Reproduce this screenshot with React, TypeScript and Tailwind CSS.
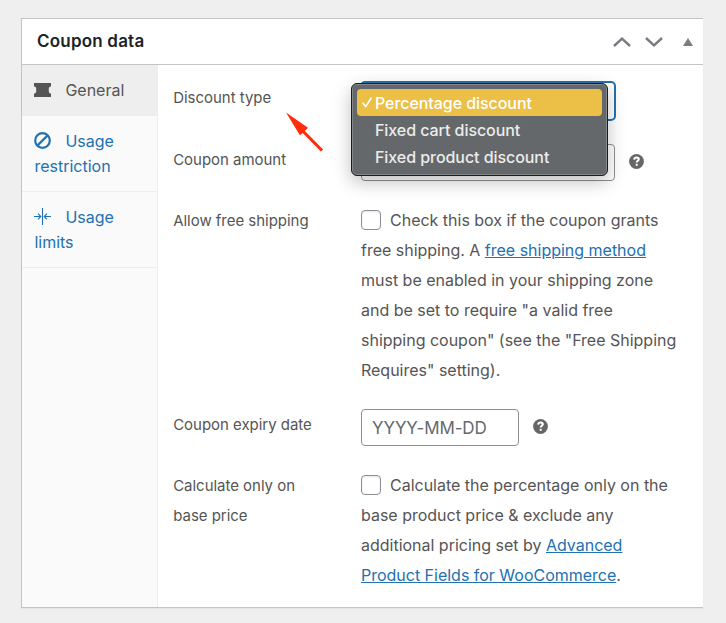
import type { ReactNode } from "react";

const discountTypes = ["Percentage discount", "Fixed cart discount", "Fixed product discount"];

function TicketIcon() {
  return (
    <svg className="relative -top-px" width="17" height="14" viewBox="0 0 17 14" fill="#555555">
      <path d="M0 0h17v3.6h-.6a2 2 0 0 0-1.6 2v2.8a2 2 0 0 0 1.6 2h.6V14H0v-3.6h.6a2 2 0 0 0 1.6-2V5.6a2 2 0 0 0-1.6-2H0Z" />
    </svg>
  );
}

function BanIcon() {
  return (
    <svg width="17" height="17" viewBox="0 0 17 17" fill="none" stroke="currentColor" strokeWidth="2.2">
      <circle cx="8.5" cy="8.5" r="7.3" />
      <path d="m3.6 13.4 9.8-9.8" />
    </svg>
  );
}

function LimitsIcon() {
  return (
    <svg width="17" height="17" viewBox="0 0 17 17" fill="none" stroke="currentColor" strokeWidth="1.1">
      <path d="M8.5 0v17" />
      <path d="M0 8.5h6.5M4 5.7l2.8 2.8L4 11.3M17 8.500h-6.500M13 5.700l-2.800 2.800 2.800 2.800" />
    </svg>
  );
}

function HelpTip() {
  return (
    <svg className="shrink-0" width="15" height="15" viewBox="0 0 15 15">
      <circle cx="7.5" cy="7.5" r="7.4" fill="#666666" />
      <path d="M5.2 5.6c.1-1.4 1-2.1 2.3-2.1s2.3.7 2.3 1.8c0 1.500-2.100 1.600-2.100 3.300" fill="none" stroke="#fff" strokeWidth="2" />
      <rect x="6.7" y="9.8" width="2" height="2" fill="#fff" />
    </svg>
  );
}

function Tab({ icon, active, children }: { icon: ReactNode; active?: boolean; children: ReactNode }) {
  return (
    <li
      className={
        active
          ? "border-b border-[#eeeeee] bg-[#eeeeee] pt-[13px] pr-3 pb-3 pl-[12.4px] text-[#555555]"
          : "border-b border-[#eeeeee] pt-[13px] pr-3 pb-3 pl-[12.4px] text-[#2271b1]"
      }
    >
      <span className="mr-[14.5px] -ml-[0.5px] inline-flex h-[17px] w-[17px] items-center align-[-1.5px]">{icon}</span>
      {children}
    </li>
  );
}

function Field({ label, className, children }: { label: ReactNode; className: string; children: ReactNode }) {
  return (
    <div className={`flex ${className}`}>
      <label className="w-[188px] shrink-0 pl-[0.2px] text-[15px] leading-[30px] tracking-[-0.03px]">{label}</label>
      {children}
    </div>
  );
}

function Checkbox() {
  return (
    <span className="mr-[9px] inline-block h-5 w-5 rounded-[4px] border border-[#8c8f94] bg-white align-[-4px] shadow-[inset_0_1px_2px_rgba(0,0,0,0.1)]" />
  );
}

export default function App() {
  return (
    <div className="h-[623px] w-[726px] overflow-hidden bg-[#efefef] pt-[18px] pl-[21px] font-['Inter','Liberation_Sans',sans-serif] text-base">
      <div className="flex h-[590px] w-[682px] flex-col border-y border-l border-[#c3c4c7] bg-white shadow-[0_1px_1px_rgba(0,0,0,0.04)]">
        <header className="flex h-[46px] shrink-0 items-center justify-between border-b border-[#c3c4c7] pr-[10.5px] pl-[15px]">
          <h2 className="text-[17px] font-semibold tracking-[0.2px] text-[#1d2327]">Coupon data</h2>
          <div className="flex items-center text-[#787c82]">
            <svg width="18" height="10" viewBox="0 0 18 10" fill="none" stroke="currentColor" strokeWidth="2.4">
              <path d="m1 9 8-7.4L17 9" />
            </svg>
            <svg className="ml-[14px]" width="18" height="10" viewBox="0 0 18 10" fill="none" stroke="currentColor" strokeWidth="2.4">
              <path d="m1 1 8 7.4L17 1" />
            </svg>
            <svg className="ml-[19.5px]" width="10" height="8" viewBox="0 0 10 8" fill="currentColor">
              <path d="m5 0 5 8H0Z" />
            </svg>
          </div>
        </header>

        <div className="flex flex-1">
          <ul className="w-[136px] shrink-0 border-r border-[#eeeeee] bg-[#fafafa] leading-[25px]">
            <Tab icon={<TicketIcon />} active>General</Tab>
            <Tab icon={<BanIcon />}>Usage<br />restriction</Tab>
            <Tab icon={<LimitsIcon />}>Usage<br />limits</Tab>
          </ul>

          <div className="flex-1 pt-[18px] pl-[15px] text-[#555555]">
            <Field label="Discount type" className="h-[62px]">
              <div className="relative -mt-0.5 -ml-px h-10 w-64 rounded-[5px] border-2 border-[#2271b1] bg-white">
                <ul className="absolute top-0 -left-[11px] z-10 h-[93px] w-[257px] rounded-[6px] border border-[#1c1d1e] bg-[#65686a] p-[5px] text-[#ececec] shadow-[inset_0_0_0_1px_#85888a,0_6px_18px_rgba(0,0,0,0.25)]">
                  {discountTypes.map((type, i) => (
                    <li
                      key={type}
                      className={
                        i === 0
                          ? "flex h-[27px] items-center rounded-[4px] bg-[#ecc046] font-medium tracking-[-0.06px] text-white"
                          : "flex h-[27px] items-center font-medium tracking-[-0.06px]"
                      }
                    >
                      <span className="flex w-[18px] justify-center pl-0.5">
                        {i === 0 && (
                          <svg width="10" height="11" viewBox="0 0 10 11" fill="none" stroke="currentColor" strokeWidth="1.6" strokeLinecap="round" strokeLinejoin="round">
                            <path d="m1 6.2 2.7 3.4L9 1.2" />
                          </svg>
                        )}
                      </span>
                      {type}
                    </li>
                  ))}
                </ul>
              </div>
              {/* pointer towards the open select */}
              <svg className="absolute top-[112px] left-[286px]" width="38" height="41" viewBox="0 0 38 41">
                <path d="m0 .5 22 15.2-3.1 3.2 18.2 18.5-2.2 2.2-18.2-18.5-2.8 2.2Z" fill="#ff2d0a" />
              </svg>
            </Field>

            <Field label="Coupon amount" className="h-[61px]">
              <div className="-mt-px h-[37px] w-[254px] rounded-[4px] border border-[#8c8f94] bg-white" />
              <div className="mt-[9px] ml-[14px]"><HelpTip /></div>
            </Field>

            <Field label="Allow free shipping" className="h-[204px]">
              <p className="-mt-px leading-[30px] tracking-[-0.01px] whitespace-nowrap">
                <Checkbox />Check this box if the coupon grants<br />
                free shipping. A <a href="#" className="text-[#2271b1] underline">free shipping method</a><br />
                must be enabled in your shipping zone<br />
                and be set to require "a valid free<br />
                shipping coupon" (see the "Free Shipping<br />
                Requires" setting).
              </p>
            </Field>

            <Field label="Coupon expiry date" className="h-[61px]">
              <div className="-mt-px flex h-[37px] w-[158px] items-center rounded-[4px] border border-[#8c8f94] bg-white pt-0.5 pl-[10px] text-[17px] tracking-[-0.1px] text-[#646970]">
                YYYY-MM-DD
              </div>
              <div className="mt-[9px] ml-[14px]"><HelpTip /></div>
            </Field>

            <Field label={<>Calculate only on<br />base price</>} className="h-[120px]">
              <p className="-mt-px leading-[30px] tracking-[-0.01px] whitespace-nowrap">
                <Checkbox />Calculate the percentage only on the<br />
                base product price &amp; exclude any<br />
                additional pricing set by <a href="#" className="text-[#2271b1] underline">Advanced</a><br />
                <a href="#" className="text-[#2271b1] underline">Product Fields for WooCommerce</a>.
              </p>
            </Field>
          </div>
        </div>
      </div>
    </div>
  );
}
